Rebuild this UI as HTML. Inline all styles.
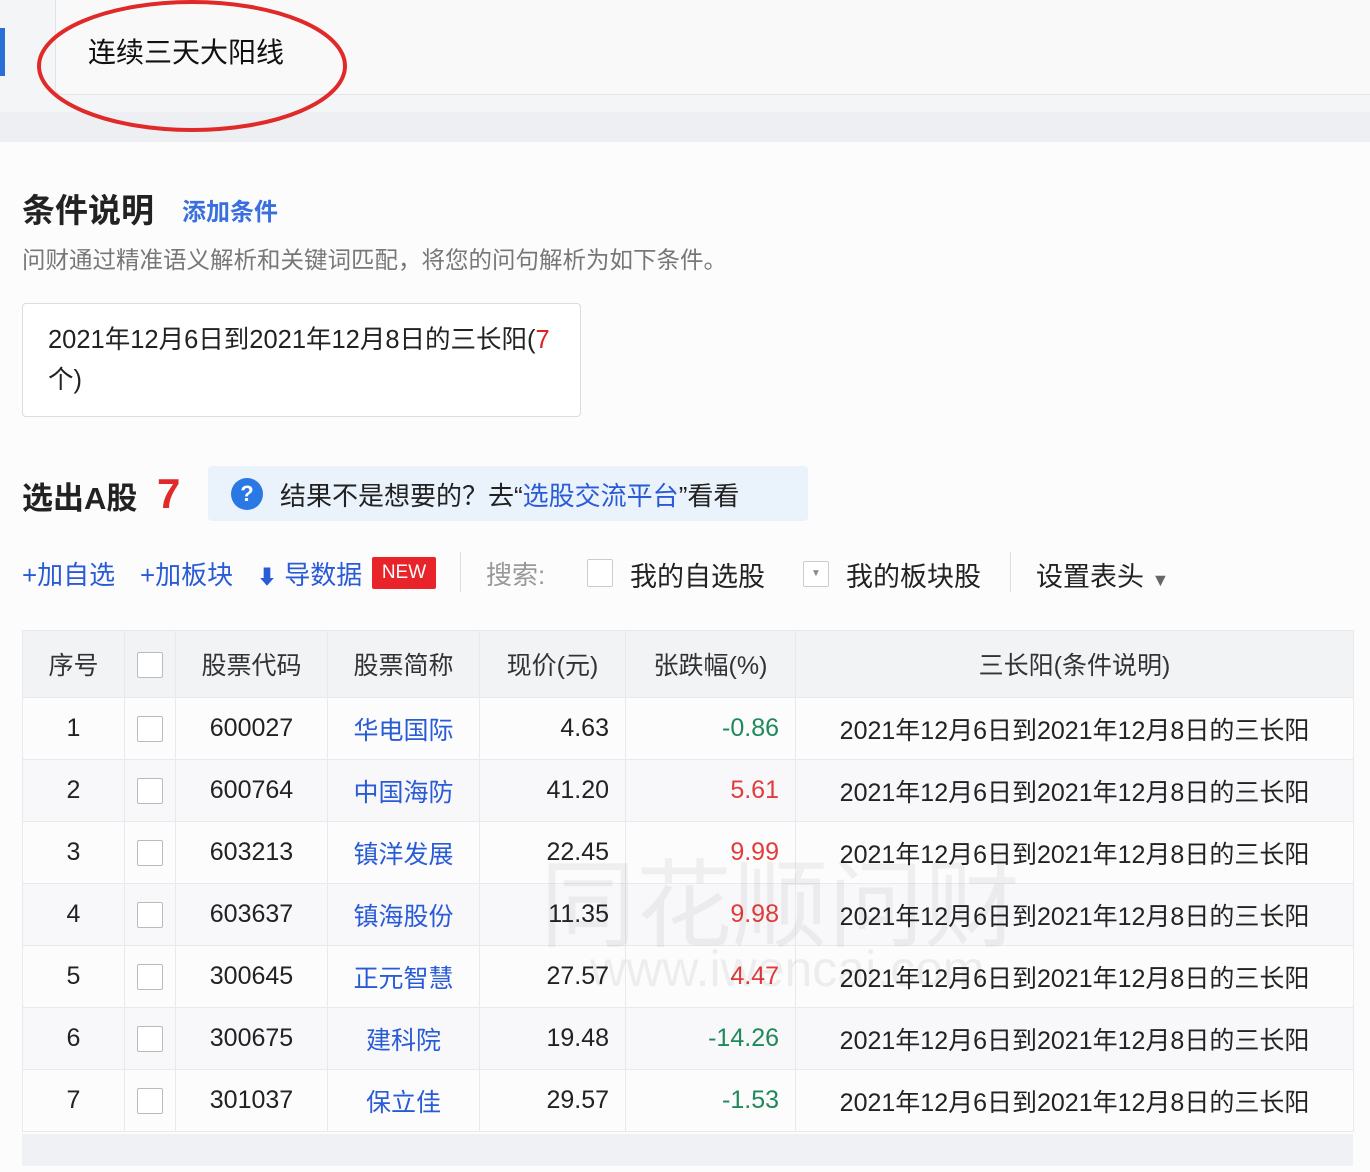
<!DOCTYPE html><html><head><meta charset="utf-8"><style>
body{margin:0;width:1370px;height:1172px;background:#fcfcfd;font-family:"Liberation Sans","Noto Sans CJK SC",sans-serif;color:#222;position:relative;overflow:hidden}
.a{position:absolute;white-space:nowrap}
.blue{color:#2a5bd7}
table{position:absolute;left:22px;top:630px;border-collapse:collapse;font-size:25px}
td{border:1px solid #e8e9ec;height:61px;padding:0;text-align:center;color:#222;vertical-align:middle}
tr.h td{background:#f2f3f5;height:66px;color:#333}
tr:nth-child(odd):not(.h) td{background:#f8f8fa}
.cb{display:inline-block;width:24px;height:24px;border:1px solid #bbb;background:#fff;border-radius:2px;vertical-align:middle}
.r{text-align:right;padding-right:16px}
.red{color:#e23b3b}.grn{color:#1e8a5a}
</style></head><body>
<div class="a" style="left:0;top:0;width:1370px;height:112px;background:#f4f5f7"></div>
<div class="a" style="left:0;top:112px;width:1370px;height:30px;background:#eeeff2"></div>
<div class="a" style="left:55px;top:0;width:1320px;height:94px;background:#f9f9fa;border:1px solid #e2e3e6;border-top:none;border-radius:0 0 0 6px"></div>
<div class="a" style="left:0;top:28px;width:5px;height:48px;background:#2a6fd6"></div>
<div class="a" style="left:88px;top:31px;font-size:28px;color:#111">连续三天大阳线</div>
<svg class="a" style="left:0;top:0" width="360" height="140"><ellipse cx="192" cy="66" rx="153" ry="64" fill="none" stroke="#e02a2a" stroke-width="4"/></svg>
<div class="a" style="left:22px;top:184px;font-size:33px;font-weight:bold;color:#222">条件说明</div>
<div class="a blue" style="left:182px;top:192px;font-size:24px;font-weight:bold;color:#3a6fe0">添加条件</div>
<div class="a" style="left:22px;top:241px;font-size:23.5px;color:#777">问财通过精准语义解析和关键词匹配，将您的问句解析为如下条件。</div>
<div class="a" style="left:22px;top:303px;width:557px;height:112px;border:1px solid #dcdde0;border-radius:4px;background:#fff"></div>
<div class="a" style="left:48px;top:320px;font-size:25.5px;line-height:40px;white-space:normal;width:520px">2021年12月6日到2021年12月8日的三长阳(<span style="color:#d22">7</span> 个)</div>
<div class="a" style="left:22px;top:473px;font-size:31px;font-weight:bold">选出A股</div>
<div class="a" style="left:157px;top:470px;font-size:42px;font-weight:bold;color:#e02a2a">7</div>
<div class="a" style="left:208px;top:466px;width:600px;height:55px;background:#eaf2fc;border-radius:4px"></div>
<div class="a" style="left:231px;top:478px;width:32px;height:32px;border-radius:50%;background:#2a78e4;color:#fff;font-size:22px;font-weight:bold;text-align:center;line-height:32px">?</div>
<div class="a" style="left:280px;top:476px;font-size:26px">结果不是想要的？去“<span class="blue">选股交流平台</span>”看看</div>
<div class="a blue" style="left:22px;top:555px;font-size:26px">+加自选</div>
<div class="a blue" style="left:140px;top:555px;font-size:26px">+加板块</div>
<div class="a blue" style="left:257px;top:555px;font-size:26px"><span style="font-size:20px">⬇</span> 导数据</div>
<div class="a" style="left:372px;top:557px;width:64px;height:32px;background:#e8242a;color:#fff;font-size:19px;text-align:center;line-height:32px;border-radius:2px">NEW</div>
<div class="a" style="left:460px;top:552px;width:1px;height:40px;background:#ddd"></div>
<div class="a" style="left:486px;top:555px;font-size:26px;color:#999">搜索:</div>
<div class="a" style="left:587px;top:559px;width:24px;height:26px;border:1px solid #ccc;border-radius:2px;background:#fff"></div>
<div class="a" style="left:630px;top:555px;font-size:27px">我的自选股</div>
<div class="a" style="left:803px;top:561px;width:24px;height:24px;border:1px solid #ccc;border-radius:2px;background:#fff;font-size:10px;color:#888;text-align:center;line-height:24px">▼</div>
<div class="a" style="left:846px;top:555px;font-size:27px">我的板块股</div>
<div class="a" style="left:1010px;top:552px;width:1px;height:40px;background:#ddd"></div>
<div class="a" style="left:1036px;top:555px;font-size:27px">设置表头 <span style="font-size:18px;color:#666">▼</span></div>
<table>
<colgroup><col style="width:102px"><col style="width:51px"><col style="width:152px"><col style="width:152px"><col style="width:146px"><col style="width:170px"><col style="width:558px"></colgroup>
<tr class="h"><td>序号</td><td><span class="cb"></span></td><td>股票代码</td><td>股票简称</td><td>现价(元)</td><td>张跌幅(%)</td><td>三长阳(条件说明)</td></tr>
<tr><td>1</td><td><span class="cb"></span></td><td>600027</td><td class="blue">华电国际</td><td class="r">4.63</td><td class="r grn">-0.86</td><td>2021年12月6日到2021年12月8日的三长阳</td></tr>
<tr><td>2</td><td><span class="cb"></span></td><td>600764</td><td class="blue">中国海防</td><td class="r">41.20</td><td class="r red">5.61</td><td>2021年12月6日到2021年12月8日的三长阳</td></tr>
<tr><td>3</td><td><span class="cb"></span></td><td>603213</td><td class="blue">镇洋发展</td><td class="r">22.45</td><td class="r red">9.99</td><td>2021年12月6日到2021年12月8日的三长阳</td></tr>
<tr><td>4</td><td><span class="cb"></span></td><td>603637</td><td class="blue">镇海股份</td><td class="r">11.35</td><td class="r red">9.98</td><td>2021年12月6日到2021年12月8日的三长阳</td></tr>
<tr><td>5</td><td><span class="cb"></span></td><td>300645</td><td class="blue">正元智慧</td><td class="r">27.57</td><td class="r red">4.47</td><td>2021年12月6日到2021年12月8日的三长阳</td></tr>
<tr><td>6</td><td><span class="cb"></span></td><td>300675</td><td class="blue">建科院</td><td class="r">19.48</td><td class="r grn">-14.26</td><td>2021年12月6日到2021年12月8日的三长阳</td></tr>
<tr><td>7</td><td><span class="cb"></span></td><td>301037</td><td class="blue">保立佳</td><td class="r">29.57</td><td class="r grn">-1.53</td><td>2021年12月6日到2021年12月8日的三长阳</td></tr>
</table>
<div class="a" style="left:22px;top:1134px;width:1331px;height:32px;background:#f0f1f4"></div>
<div class="a" style="left:540px;top:828px;font-size:96px;color:rgba(0,0,0,0.05)">同花顺问财</div>
<div class="a" style="left:590px;top:940px;font-size:50px;color:rgba(0,0,0,0.06)">www.iwencai.com</div>
</body></html>
